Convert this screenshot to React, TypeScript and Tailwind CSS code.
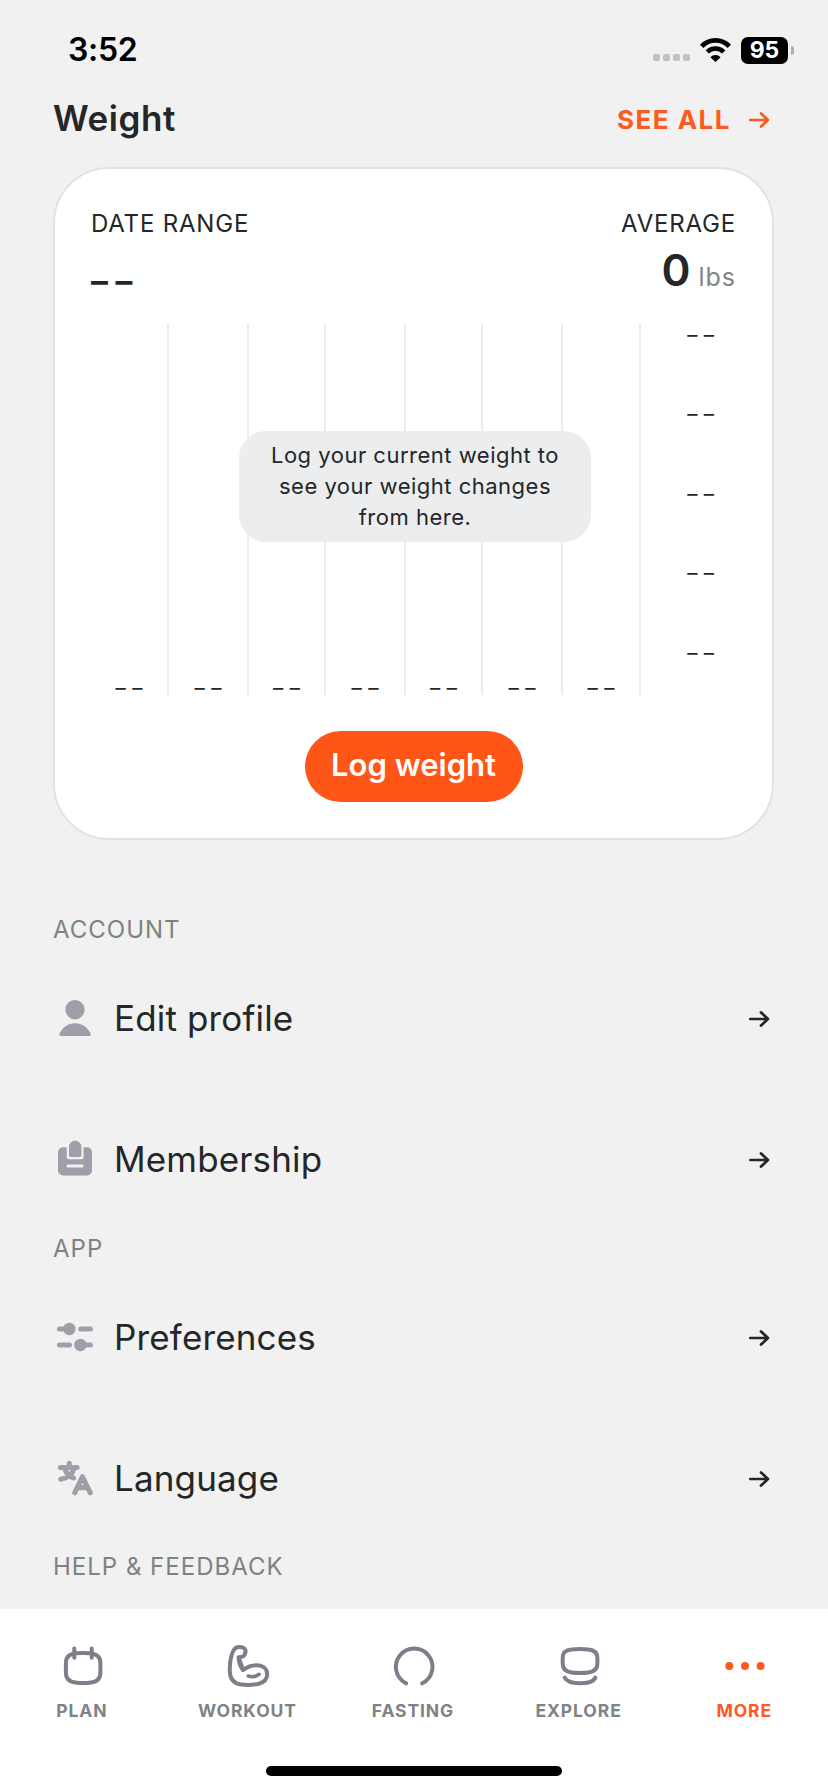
import type { ReactNode } from "react";

const gridLines = [
  { label: "_ _", width: "w-[78px]" },
  { label: "_ _", width: "w-[80px]" },
  { label: "_ _", width: "w-[77px]" },
  { label: "_ _", width: "w-[80px]" },
  { label: "_ _", width: "w-[77px]" },
  { label: "_ _", width: "w-[80px]" },
  { label: "_ _", width: "w-[78px]" },
];

const yLabels = ["_ _", "_ _", "_ _", "_ _", "_ _"];

function ArrowIcon() {
  return (
    <svg width="22" height="20" viewBox="0 0 22 20" fill="none" stroke="currentColor" strokeWidth="2.7" strokeLinecap="round" strokeLinejoin="round">
      <path d="M2.3 10H20M13 3.4 20 10l-7 6.6" />
    </svg>
  );
}

function ProfileIcon() {
  return (
    <svg width="40" height="40" viewBox="0 0 40 40" fill="currentColor">
      <circle cx="20" cy="11.7" r="9.7" />
      <path d="M4.7 35.2C8 29 13 25.3 20 25.3S32 29 35.5 35.2Q36.4 38 34.3 38H5.9Q3.8 38 4.7 35.2Z" />
    </svg>
  );
}

function MembershipIcon() {
  return (
    <svg width="40" height="40" viewBox="0 0 40 40" fill="currentColor">
      <rect x="3" y="8.2" width="34" height="28.3" rx="5" />
      <path d="M11.7 6V18.2Q11.7 20.3 13.8 20.3H26.4Q28.5 20.3 28.5 18.2V6Z" fill="#f1f1f1" />
      <path d="M14 7.8a6.2 6.2 0 0 1 12.4 0V16.4Q26.4 18 24.8 18H15.6Q14 18 14 16.4Z" />
      <path d="M13 27H27.2" stroke="#f1f1f1" strokeWidth="3" strokeLinecap="round" />
    </svg>
  );
}

function PreferencesIcon() {
  return (
    <svg width="40" height="40" viewBox="0 0 40 40" fill="currentColor" stroke="currentColor" strokeLinecap="round">
      <path d="M4.5 12H14M25.8 12H35.5M4.5 28H14.5M25 28H35.5" strokeWidth="5" />
      <circle cx="14.3" cy="12" r="6.2" stroke="none" />
      <circle cx="25.4" cy="28" r="6.2" stroke="none" />
    </svg>
  );
}

function LanguageIcon() {
  return (
    <svg width="40" height="40" viewBox="0 0 40 40" fill="none" stroke="currentColor" strokeWidth="5" strokeLinecap="round" strokeLinejoin="round">
      <path d="M14.3 5.3V9M5.4 9.4H22.1M19 10.5C17.5 16.5 12.5 20 5.8 21.3M9.8 10.5C11 15 14 18.2 18.6 20" />
      <path d="M19.8 34.7 27.4 18.8 35.2 34.7M22.8 29.6H32" strokeWidth="5.2" />
    </svg>
  );
}

function PlanIcon() {
  return (
    <svg width="44" height="46" viewBox="-1 -1 44 46" fill="none" stroke="currentColor" strokeWidth="4" strokeLinecap="round">
      <path d="M14 9.3Q21 8.7 28 9.3C35 10 38.4 13 38.4 19V28.5C38.4 35 35 37.8 29 38.5Q21 39.6 13.5 38.5C7 37.8 3.9 35 3.9 28.5V19C3.9 13 7 10 14 9.3Z" />
      <path d="M12.3 4.6V13.8M29.7 4.6V13.8" />
    </svg>
  );
}

function WorkoutIcon() {
  return (
    <svg width="46" height="46" viewBox="-0.6 0 46 46" fill="none" stroke="currentColor" strokeWidth="4" strokeLinecap="round" strokeLinejoin="round">
      <path d="M13 14.2 17.4 27C23 23 27 22.3 31 22.3C37.5 22.3 41.6 26 41.6 31.3C41.6 37.5 37.5 39.8 32.5 41C27 42 21 42.2 16 41.6C9 40.8 4.5 37.3 4.2 28.5C4 20 5 13.5 7.6 8C9.2 4.5 12 3.7 14.8 4C18 4.3 20.4 6 20 9L19.3 10.2C19.7 12.8 17.5 14 13 14.2C13.2 19 14.5 23.5 17.4 27" />
      <path d="M22.7 33Q28.5 35 33.5 31.3" strokeWidth="3.6" />
    </svg>
  );
}

function FastingIcon() {
  return (
    <svg width="46" height="46" viewBox="0 0 46 46" fill="none" stroke="currentColor" strokeWidth="4" strokeLinecap="round">
      <path d="M15.2 40.3A18.3 18.3 0 1 1 31.2 40.3" />
    </svg>
  );
}

function ExploreIcon() {
  return (
    <svg width="44" height="46" viewBox="0 -1 44 46" fill="none" stroke="currentColor" strokeWidth="4" strokeLinecap="round">
      <path d="M13.5 5.4Q22 4.4 30.5 5.4C36.8 6 39.4 8.6 39.4 14V19.5C39.4 25 36.8 27.8 30.5 28.4Q22 29.4 13.5 28.4C7.2 27.8 4.7 25 4.7 19.5V14C4.7 8.6 7.2 6 13.5 5.4Z" />
      <path d="M6.7 33.7C8.5 37.3 13 39.3 22 39.3S35.5 37.3 37.4 33.7" />
    </svg>
  );
}

function MoreIcon() {
  return (
    <svg width="46" height="46" viewBox="0 0 46 46" fill="currentColor">
      <circle cx="7.3" cy="23" r="4" />
      <circle cx="23" cy="23" r="4" />
      <circle cx="38.6" cy="23" r="4" />
    </svg>
  );
}

function StatusBar() {
  return (
    <div className="flex h-[84px] items-start justify-between pl-[68px] pr-[34px] pt-[30px] text-black">
      <span className="text-[32px] leading-[40px] font-semibold tracking-[-0.3px]">3:52</span>
      <div className="flex h-[40px] items-center">
        <div className="mt-[15px] flex gap-[3px]">
          {[0, 1, 2, 3].map((i) => (
            <span key={i} className="size-[7px] rounded-[2px] bg-[#c1c1c1]" />
          ))}
        </div>
        <svg className="ml-[9px]" width="34" height="26" viewBox="0 0 34 26" fill="none" stroke="#000">
          <path d="M2.7 9.3a19 19 0 0 1 27.6 0" strokeWidth="4.8" />
          <path d="M8.3 15a11.4 11.4 0 0 1 16.4 0" strokeWidth="4.6" />
          <path d="M16.5 25 11.4 20.2a7.2 7.2 0 0 1 10.2 0Z" fill="#000" stroke="none" />
        </svg>
        <div className="ml-[8px] flex h-[27px] w-[47px] items-center justify-center rounded-[7px] bg-black text-[23px] leading-none font-bold text-white">
          95
        </div>
        <span className="ml-[3px] h-[9px] w-[3px] rounded-r-full bg-[#b0b0b0]" />
      </div>
    </div>
  );
}

function WeightCard() {
  return (
    <div className="mx-[53px] h-[673px] w-[721px] rounded-[56px] border-2 border-[#e1e2e2] bg-white px-[36px] pt-[39px]">
      <div className="flex justify-between text-[24px] leading-[32px] tracking-[0.8px]">
        <span>DATE RANGE</span>
        <span>AVERAGE</span>
      </div>
      <div className="flex h-[84px] justify-between">
        <span className="pt-[8px] text-[36px] leading-[40px] font-semibold [word-spacing:-1.5px]">_ _</span>
        <div className="flex items-baseline gap-[8px] pt-[6px]">
          <span className="text-[44px] leading-[48px] font-semibold">0</span>
          <span className="text-[25px] tracking-[1px] text-[#808587]">lbs</span>
        </div>
      </div>

      {/* Empty chart */}
      <div className="relative flex h-[371px]">
        {gridLines.map((line, i) => (
          <div key={i} className={`${line.width} flex flex-col items-center justify-end border-r-2 border-[#ebecec] pb-[3px]`}>
            <span className="text-[22.5px] leading-[24px]">{line.label}</span>
          </div>
        ))}
        <div className="-mt-[9px] flex flex-1 flex-col items-end pr-[22px]">
          {yLabels.map((label, i) => (
            <span key={i} className="h-[79.4px] shrink-0 text-[22.5px] leading-[24px]">{label}</span>
          ))}
        </div>
        <div className="absolute top-[107px] left-[148px] h-[111px] w-[352px] rounded-[27px] bg-[#ebedef] px-6 pt-[9px] text-center text-[22px] leading-[31px] tracking-[0.5px]">
          Log your current weight to
          <br />
          see your weight changes
          <br />
          from here.
        </div>
      </div>

      <div className="mt-[36px] flex justify-center">
        <button className="h-[71px] w-[218px] rounded-full bg-[#ff5617] pb-[3px] text-[31px] font-semibold text-white">
          Log weight
        </button>
      </div>
    </div>
  );
}

function SectionLabel({ children }: { children: ReactNode }) {
  return <h2 className="h-[36.5px] text-[24px] leading-[38px] tracking-[1px] text-[#7d8285]">{children}</h2>;
}

function MenuRow({ icon, label }: { icon: ReactNode; label: string }) {
  return (
    <div className="flex h-[141px] items-center pr-[4px] pl-[2px]">
      <span className="text-[#9e9fa8]">{icon}</span>
      <span className="ml-[19px] flex-1 text-[35px] leading-[44px] tracking-[0.15px]">{label}</span>
      <span className="pt-[2px]">
        <ArrowIcon />
      </span>
    </div>
  );
}

const tabs = [
  { name: "PLAN", icon: <PlanIcon /> },
  { name: "WORKOUT", icon: <WorkoutIcon /> },
  { name: "FASTING", icon: <FastingIcon /> },
  { name: "EXPLORE", icon: <ExploreIcon /> },
  { name: "MORE", icon: <MoreIcon />, active: true },
];

export default function App() {
  return (
    <div className="flex h-[1792px] w-[828px] flex-col overflow-hidden bg-[#f1f1f1] font-['Inter',sans-serif] text-[#242627]">
      <StatusBar />

      <div className="flex h-[83px] items-start justify-between pr-[58px] pl-[53px]">
        <h1 className="pt-[12px] text-[35px] leading-[44px] font-semibold tracking-[0.6px]">Weight</h1>
        <div className="flex items-center gap-[17px] pt-[16px] text-[#fc5a1f]">
          <span className="text-[26px] leading-[40px] font-bold tracking-[1.5px]">SEE ALL</span>
          <ArrowIcon />
        </div>
      </div>

      <WeightCard />

      {/* Menu */}
      <main className="flex-1 overflow-hidden pt-[71px] pr-[54px] pl-[53px]">
        <SectionLabel>ACCOUNT</SectionLabel>
        <MenuRow icon={<ProfileIcon />} label="Edit profile" />
        <MenuRow icon={<MembershipIcon />} label="Membership" />
        <SectionLabel>APP</SectionLabel>
        <MenuRow icon={<PreferencesIcon />} label="Preferences" />
        <MenuRow icon={<LanguageIcon />} label="Language" />
        <SectionLabel>HELP &amp; FEEDBACK</SectionLabel>
      </main>

      {/* Bottom tabs */}
      <nav className="h-[183px] bg-white">
        <div className="grid h-[157px] grid-cols-5 pt-[34px]">
          {tabs.map((tab) => (
            <div key={tab.name} className={`flex flex-col items-center ${tab.active ? "text-[#fc5a1f]" : "text-[#7d7f88]"}`}>
              {tab.icon}
              <span className={`mt-[10px] pr-[2px] text-[17.5px] leading-[24px] font-bold tracking-[0.9px] ${tab.active ? "" : "text-[#7f8386]"}`}>
                {tab.name}
              </span>
            </div>
          ))}
        </div>
        <div className="mx-auto h-[10px] w-[296px] rounded-full bg-black" />
      </nav>
    </div>
  );
}
